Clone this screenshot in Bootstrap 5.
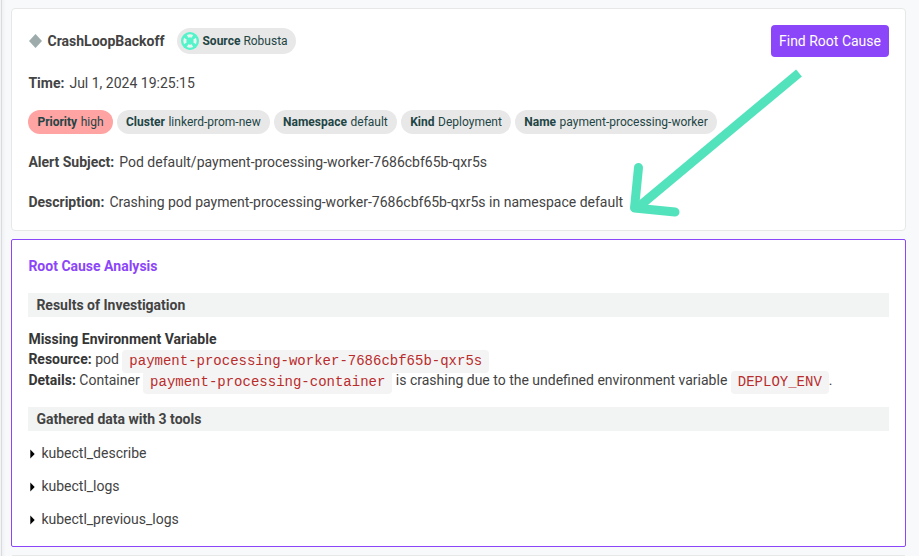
<!DOCTYPE html>
<html lang="en">
<head>
<meta charset="utf-8">
<meta name="viewport" content="width=device-width, initial-scale=1">
<title>CrashLoopBackoff</title>
<link href="https://cdn.jsdelivr.net/npm/bootstrap@5.3.0/dist/css/bootstrap.min.css" rel="stylesheet">
<style>
body{font-family:Roboto,sans-serif;font-size:14px;line-height:20px;color:#434343;background:#f8f9fb;height:556px;overflow:hidden}
b{font-weight:700}
.edge{width:11px;height:556px;background:linear-gradient(90deg,#f3f4f5 0 1px,#d9dbde 1px 2px,#eff1f4 2px,#f8f9fb 6px);flex:none}
.stack{width:895px;gap:8px;padding-top:8px}
.panel{background:#fff;border:1px solid #e6e8e8;border-radius:4px;padding:0 16px;flex:none}
.alert-panel{height:223px}
.rca-panel{height:308px;border-color:#8c46f9;border-radius:2px}
.next-panel{height:1px;border-width:1px 0 0;margin:0 1px}
.head{height:32px;margin-top:16px}
.head-title{margin-left:5.500px;font-size:14px}
.pill{background:#e8e8e8;color:#1f4545;border-radius:13px;height:24px;padding:0 9px 0 9.400px;font-size:12px;line-height:24px}
.pill b{margin-right:3.600px}
.pill-source{height:26px;margin-left:12.500px;padding:0 8px 0 4px;line-height:26px}
.pill-source b{margin-right:3px}
.source-name{margin-left:3.500px}
.pill-high{background:#ffa3a3}
.btn-find{background:#8c46f9;color:#fff;font-size:14px;line-height:20px;padding:6px 8px;border:0;border-radius:4px;height:32px}
.btn-find:hover{background:#7a35e6;color:#fff}
.line{padding-left:.4px}
.lbl{margin-right:5px}
.time-row{margin-top:16px}
.pills{margin-top:17px;gap:4px}
.subject{margin-top:18px}
.desc{margin-top:20px}
.rca-title{color:#8c46f9;margin-top:16px}
.band{background:#f2f4f4;height:24px;line-height:24px;padding-left:8.400px}
.band-results{margin-top:17px}
.band-tools{margin-top:15px}
.finding{margin-top:12px;height:63px;line-height:21px}
.finding div:first-child{height:20px}
.finding b{color:#363636}
.chip{font-family:"Liberation Mono",monospace;font-size:14px;line-height:1;color:#b92c2c;background:#f4f4f4;border-radius:4px;padding:3px 7px 4px;position:relative;top:1px}
.tools{margin-top:6px}
.tool{height:33px;line-height:33px;gap:5.400px}
.arrow{left:620px;top:60px;pointer-events:none}
</style>
</head>
<body>
<div class="d-flex">
<div class="edge"></div>
<main class="stack d-flex flex-column">
  <section class="panel alert-panel">
    <div class="head d-flex align-items-center">
      <svg width="14" height="14" viewBox="0 0 14 14"><path d="M7.500 0 14 7 7.500 14 1 7z" fill="#9dabab"/></svg>
      <b class="head-title">CrashLoopBackoff</b>
      <div class="pill pill-source d-flex align-items-center">
        <svg width="18" height="18" viewBox="0 0 18 18"><circle cx="9" cy="9" r="9" fill="#54f3c9"/><g fill="#e8f5f1"><path d="M5.800 3Q9 1.600 12.200 3L10.600 5.700Q9 5 7.400 5.700zM5.800 15Q9 16.400 12.200 15L10.600 12.300Q9 13 7.400 12.300zM3 5.800Q1.600 9 3 12.200L5.700 10.600Q5 9 5.700 7.400zM15 5.800Q16.400 9 15 12.200L12.300 10.600Q13 9 12.300 7.400z"/></g></svg>
        <span class="source-name"><b>Source</b>Robusta</span>
      </div>
      <button type="button" class="btn btn-find ms-auto">Find Root Cause</button>
    </div>
    <div class="line time-row"><b class="lbl">Time:</b>Jul 1, 2024 19:25:15</div>
    <div class="pills d-flex">
      <span class="pill pill-high"><b>Priority</b>high</span>
      <span class="pill"><b>Cluster</b>linkerd-prom-new</span>
      <span class="pill"><b>Namespace</b>default</span>
      <span class="pill"><b>Kind</b>Deployment</span>
      <span class="pill"><b>Name</b>payment-processing-worker</span>
    </div>
    <div class="line subject"><b class="lbl">Alert Subject:</b>Pod default/payment-processing-worker-7686cbf65b-qxr5s</div>
    <div class="line desc"><b class="lbl">Description:</b>Crashing pod payment-processing-worker-7686cbf65b-qxr5s in namespace default</div>
  </section>
  <section class="panel rca-panel">
    <div class="line rca-title"><b>Root Cause Analysis</b></div>
    <div class="band band-results"><b>Results of Investigation</b></div>
    <div class="line finding">
      <div><b>Missing Environment Variable</b></div>
      <div><b>Resource:</b> pod <span class="chip">payment-processing-worker-7686cbf65b-qxr5s</span></div>
      <div><b>Details:</b> Container <span class="chip">payment-processing-container</span> is crashing due to the undefined environment variable <span class="chip">DEPLOY_ENV</span>.</div>
    </div>
    <div class="band band-tools"><b>Gathered data with 3 tools</b></div>
    <div class="tools">
      <div class="tool d-flex align-items-center"><svg width="8" height="10" viewBox="0 0 8 10"><path d="M2.300 .5 6.700 5 2.300 9.500z"/></svg>kubectl_describe</div>
      <div class="tool d-flex align-items-center"><svg width="8" height="10" viewBox="0 0 8 10"><path d="M2.300 .5 6.700 5 2.300 9.500z"/></svg>kubectl_logs</div>
      <div class="tool d-flex align-items-center"><svg width="8" height="10" viewBox="0 0 8 10"><path d="M2.300 .5 6.700 5 2.300 9.500z"/></svg>kubectl_previous_logs</div>
    </div>
  </section>
  <section class="panel next-panel"></section>
</main>
</div>
<svg class="arrow position-absolute" width="200" height="160" viewBox="620 60 200 160" fill="none" stroke="#52e3bc" stroke-width="9"><path d="M799 73 636 209"/><path d="M638.500 167.500 634.500 208 675 212" stroke-linecap="round" stroke-linejoin="round"/></svg>
<script src="https://cdn.jsdelivr.net/npm/bootstrap@5.3.0/dist/js/bootstrap.bundle.min.js"></script>
</body>
</html>
